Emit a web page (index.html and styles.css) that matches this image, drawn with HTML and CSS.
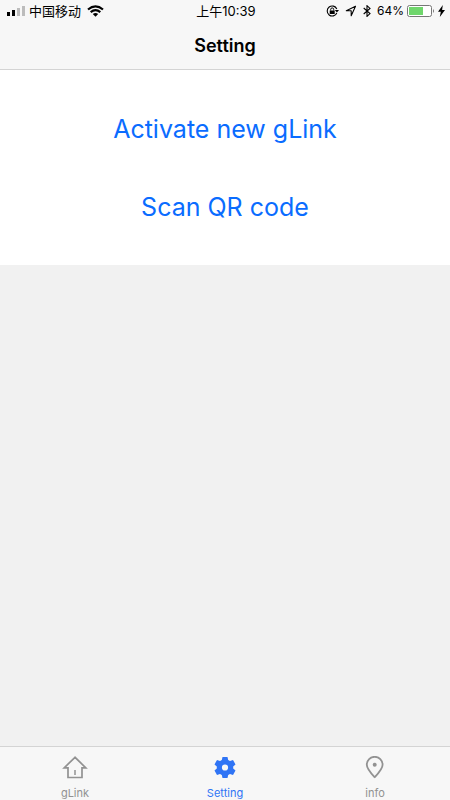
FILE: index.html
```html
<!DOCTYPE html>
<html lang="en">
<head>
<meta charset="utf-8">
<meta name="viewport" content="width=device-width, initial-scale=1">
<title>Setting</title>
<link rel="stylesheet" href="styles.css">
</head>
<body>
<header class="top">
  <div class="status">
    <div class="status-left">
      <svg width="18" height="12" viewBox="0 0 18 12" aria-hidden="true">
        <path d="M0 7h3v4H0zM5 5h3v6H5z" fill="#000"/>
        <path d="M10 3h3v8h-3zM15 1h3v10h-3z" fill="#bcbcbc"/>
      </svg>
      <span class="carrier" lang="zh">中国移动</span>
      <svg class="wifi" width="17" height="12" viewBox="0 0 17 12" aria-hidden="true">
        <path d="M1 4.500Q8.500-1.800 16 4.500M3.700 7.200Q8.500 3.200 13.300 7.200" fill="none" stroke="#000" stroke-width="2.200"/>
        <path d="M5.800 9Q8.500 7 11.200 9L8.500 11.700z" fill="#000"/>
      </svg>
    </div>
    <time class="clock" lang="zh">上午10:39</time>
    <div class="status-right">
      <svg width="13" height="12" viewBox="0 0 13 12" aria-hidden="true">
        <path d="M10.800 4A5 5 0 1 0 10.800 8" fill="none" stroke="#000" stroke-width="1.100"/>
        <path d="M8.800 5h4.200l-2.100 2.600z" fill="#000"/>
        <path d="M3.700 5.500h5V9h-5z" fill="#000"/>
        <path d="M4.700 5.500V4.400a1.500 1.500 0 0 1 3 0v1.100" fill="none" stroke="#000"/>
      </svg>
      <svg width="12" height="12" viewBox="0 0 12 12" aria-hidden="true">
        <path d="M10.500 1.200 1.300 5.800h4.900v5z" fill="none" stroke="#000" stroke-width="1.100" stroke-linejoin="round"/>
      </svg>
      <svg width="8" height="12" viewBox="0 0 8 12" aria-hidden="true">
        <path d="M.7 3 7 8.600 4 11.400V.7l3 2.700L.7 9" fill="none" stroke="#000" stroke-width="1.100"/>
      </svg>
      <div class="battery">
        <span class="percent">64%</span>
        <svg width="28" height="12" viewBox="0 0 28 12" aria-hidden="true">
          <rect x=".5" y=".5" width="24" height="11" rx="2" fill="#fff" stroke="#777"/>
          <path d="M2 2h14v8H2z" fill="#6fd66c"/>
          <path d="M26 4q2 2 0 4z" fill="#777"/>
        </svg>
        <svg width="7" height="12" viewBox="0 0 7 12" aria-hidden="true">
          <path d="M4.800 0 0 6.700h2.800L1.800 12 7 5H4.100z" fill="#000"/>
        </svg>
      </div>
    </div>
  </div>
  <h1 class="title">Setting</h1>
</header>
<main class="content">
  <div class="actions">
    <button class="action" type="button">Activate new gLink</button>
    <button class="action" type="button">Scan QR code</button>
  </div>
</main>
<nav class="tabs" aria-label="Main">
  <a class="tab" href="#glink">
    <svg width="26" height="24" viewBox="0 0 26 24" aria-hidden="true">
      <path d="M13 1.300 2.200 11.800H6V21.500H20V11.800h3.800z" fill="none" stroke="#929292" stroke-width="1.700"/>
      <path d="M13 14v5" stroke="#929292" stroke-width="1.500"/>
    </svg>
    <span>gLink</span>
  </a>
  <a class="tab tab-active" href="#setting" aria-current="page">
    <svg width="26" height="24" viewBox="-.5 .5 25 24" aria-hidden="true">
      <path fill="currentColor" fill-rule="evenodd" d="M9.500 1.500h5l.7 3.100 1.800 1 3-1 2.500 4.300-2.300 2.100v2l2.300 2.100-2.500 4.300-3-1-1.800 1-.7 3.100h-5l-.7-3.100-1.800-1-3 1-2.500-4.300L3.800 13v-2L1.500 8.900 4 4.600l3 1 1.800-1zM12 8.900a3.100 3.100 0 1 0 0 6.200 3.100 3.100 0 0 0 0-6.200z"/>
    </svg>
    <span>Setting</span>
  </a>
  <a class="tab" href="#info">
    <svg width="26" height="24" viewBox="0 0 26 24" aria-hidden="true">
      <path d="M12.700 21.200C9 17.200 4.800 12.800 4.800 8.700a7.900 7.900 0 0 1 15.800 0C20.600 12.800 16.400 17.200 12.700 21.200z" fill="none" stroke="#929292" stroke-width="1.800" stroke-linejoin="round"/>
      <circle cx="12.700" cy="8.700" r="2" fill="#929292"/>
    </svg>
    <span>info</span>
  </a>
</nav>
</body>
</html>
```
FILE: styles.css
```css
* {
  box-sizing: border-box;
}

body {
  margin: 0;
  min-height: 100vh;
  display: flex;
  flex-direction: column;
  background: #f1f1f1;
  color: #000;
  font-family: Inter, "Noto Sans CJK SC", sans-serif;
}

svg {
  display: block;
  flex: none;
}

.top {
  background: #f7f7f7;
  border-bottom: 1px solid #d4d4d4;
}

.status {
  display: grid;
  grid-template-columns: 1fr auto 1fr;
  align-items: center;
  height: 22px;
  padding: 0 5px 0 7px;
  font-size: 13px;
  line-height: 22px;
}

.status-left,
.status-right,
.battery {
  display: flex;
  align-items: center;
  gap: 4px;
}

.status-right {
  justify-content: flex-end;
  gap: 6px;
}

.battery {
  gap: 3px;
}

.wifi {
  margin-left: 2px;
}

.percent {
  font-size: 12px;
}

.title {
  margin: 0;
  padding: 13px 0 12px;
  font-size: 18px;
  font-weight: 600;
  line-height: 22px;
  text-align: center;
}

.content {
  flex: 1;
}

.actions {
  display: flex;
  flex-direction: column;
  padding: 20px 16px 19px;
  background: #fff;
}

.action {
  height: 78px;
  padding: 0;
  border: 0;
  background: none;
  color: #0a6cff;
  font-family: inherit;
  font-size: 25px;
  line-height: 32px;
}

.tabs {
  display: grid;
  grid-template-columns: repeat(3, 1fr);
  background: #f7f7f7;
  border-top: 1px solid #d4d4d4;
}

.tab {
  display: flex;
  flex-direction: column;
  align-items: center;
  gap: 7px;
  padding-top: 9px;
  color: #929292;
  font-size: 11px;
  line-height: 13px;
  text-decoration: none;
}

.tab-active {
  color: #2f74f5;
}
```
